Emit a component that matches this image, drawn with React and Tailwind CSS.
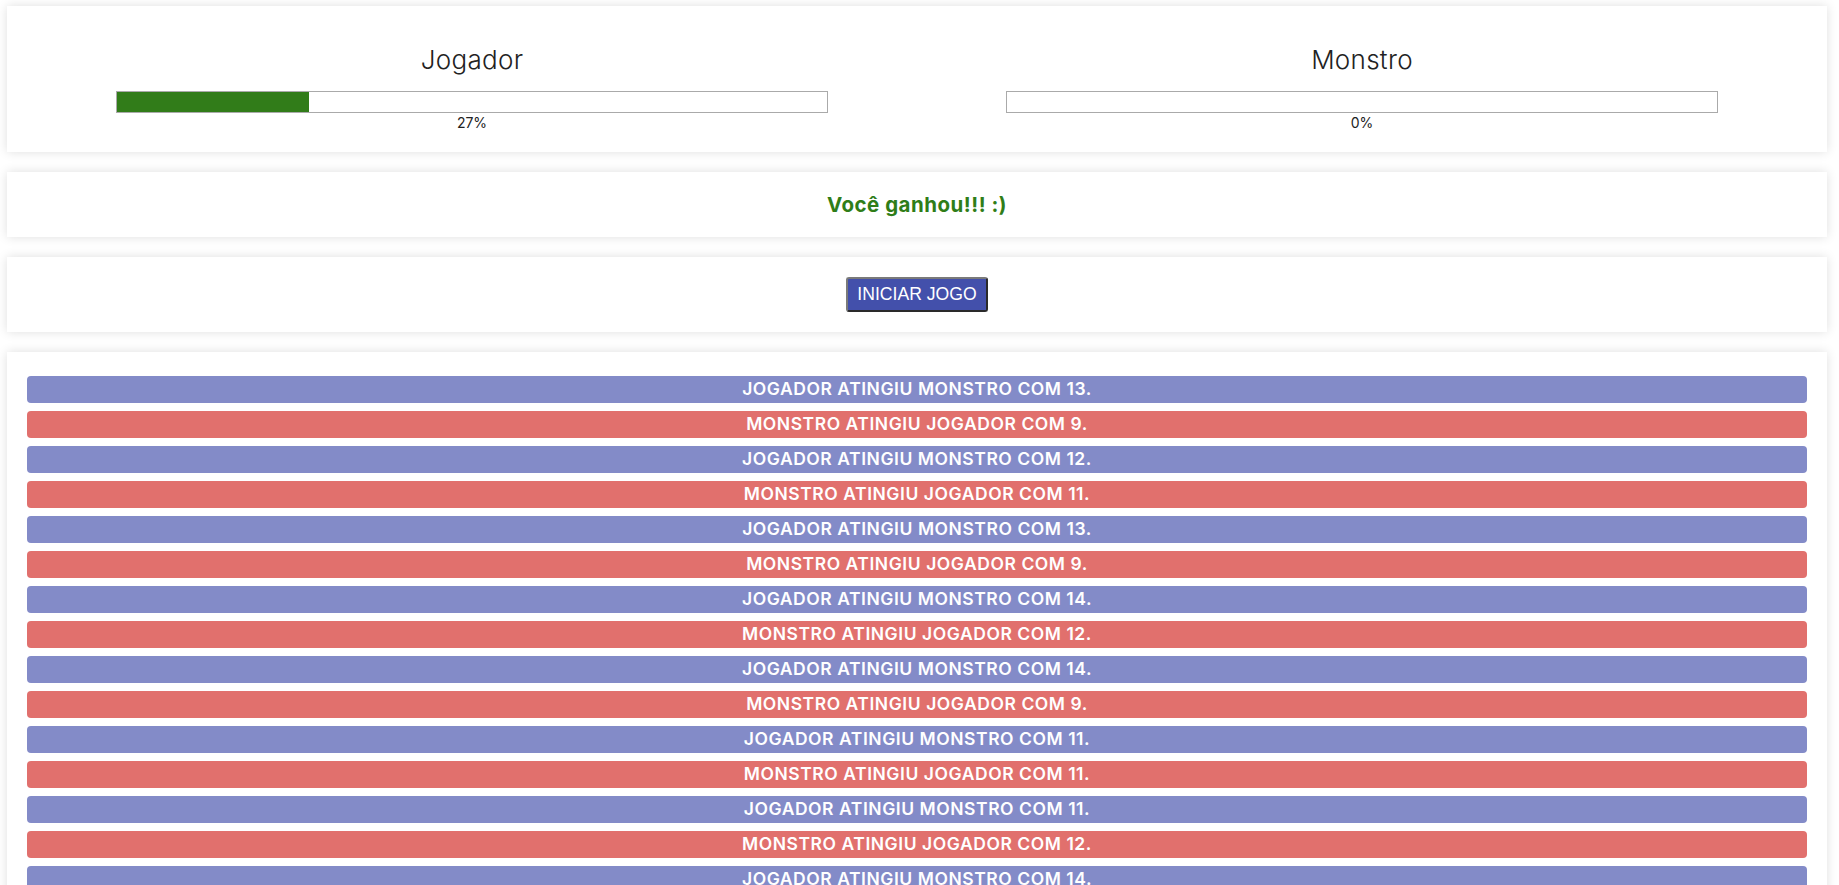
import React from "react";

const logs = [
  ["j", 13], ["m", 9], ["j", 12], ["m", 11], ["j", 13], ["m", 9], ["j", 14], ["m", 12],
  ["j", 14], ["m", 9], ["j", 11], ["m", 11], ["j", 11], ["m", 12], ["j", 14], ["m", 10],
  ["j", 12], ["m", 8],
];

function Health({ name, pct }) {
  return (
    <div className="flex-1 flex flex-col items-center">
      <h1 className="mt-[16px] mb-[13px] text-[26px] leading-[36px] font-light text-[#222] tracking-[0.3px]">{name}</h1>
      <div className="w-[80%] h-[22px] border border-[#aaa] bg-white">
        <div className="h-full bg-[#317c19]" style={{ width: `${pct}%` }} />
      </div>
      <div className="text-[14px] leading-[20px] text-[#222]">{pct}%</div>
    </div>
  );
}

export default function App() {
  return (
    <div
      className="bg-white min-h-screen pt-[6px] pb-[20px] pl-[7px] pr-[12px] flex flex-col gap-[20px]"
      style={{ fontFamily: "Inter, 'Open Sans', sans-serif" }}
    >
      <div className="bg-white shadow-[0_0_10px_rgba(0,0,0,0.13)] px-[20px] pt-[20px] pb-[19px] flex">
        <Health name="Jogador" pct={27} />
        <Health name="Monstro" pct={0} />
      </div>

      <div className="bg-white shadow-[0_0_10px_rgba(0,0,0,0.13)] py-[20px] flex justify-center">
        <span className="text-[20.5px] leading-[25px] font-bold tracking-[0.5px] text-[#2f7d18]">Você ganhou!!! :)</span>
      </div>

      <div className="bg-white shadow-[0_0_10px_rgba(0,0,0,0.13)] py-[20px] flex justify-center">
        <button
          className="h-[35px] px-[9px] bg-[#4350ab] text-white text-[17.6px] leading-[21px] rounded-[3px] border-2 border-t-[#7a7a7a] border-l-[#7a7a7a] border-r-[#2a2a2a] border-b-[#2a2a2a]"
          style={{ fontFamily: "'Liberation Sans', Arial, sans-serif" }}
        >
          INICIAR JOGO
        </button>
      </div>

      <div className="bg-white shadow-[0_0_10px_rgba(0,0,0,0.13)] px-[20px] pt-[24px] pb-[20px] flex flex-col gap-[8px]">
        {logs.map(([who, dmg], i) => (
          <div
            key={i}
            className={
              "h-[27px] rounded-[4px] flex items-center justify-center text-white font-semibold text-[17.5px] tracking-[0.55px] uppercase " +
              (who === "j" ? "bg-[#838bc8]" : "bg-[#e1706d]")
            }
          >
            {who === "j"
              ? `JOGADOR ATINGIU MONSTRO COM ${dmg}.`
              : `MONSTRO ATINGIU JOGADOR COM ${dmg}.`}
          </div>
        ))}
      </div>
    </div>
  );
}
